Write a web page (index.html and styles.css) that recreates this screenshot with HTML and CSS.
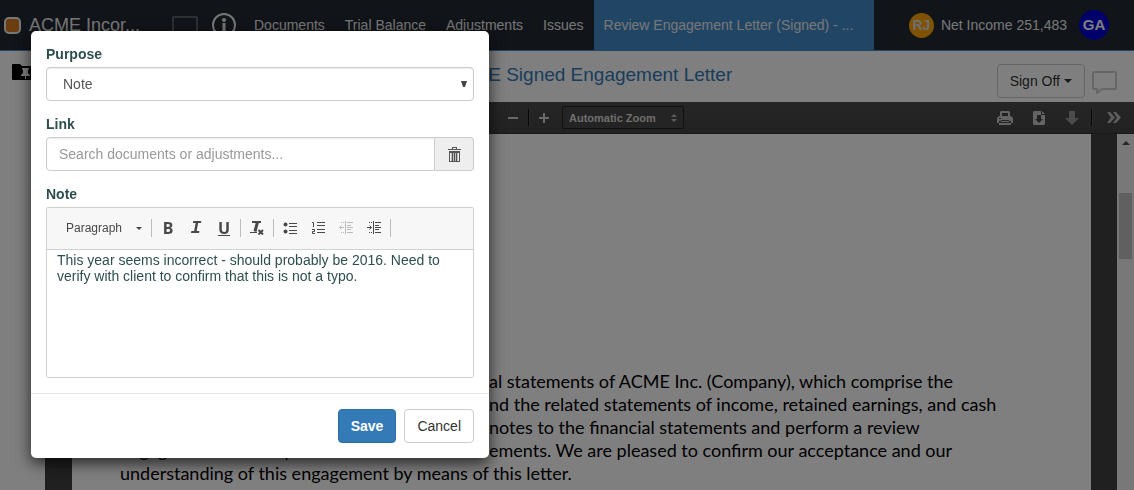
FILE: index.html
```html
<!DOCTYPE html>
<html lang="en">
<head>
<meta charset="utf-8">
<title>Review Engagement Letter</title>
<link rel="stylesheet" href="styles.css">
</head>
<body>
<div class="app">
  <nav class="nav">
    <span class="brand-mark"></span>
    <span class="brand">ACME Incor...</span>
    <svg class="nav-box" width="26" height="18" viewBox="0 0 26 18"><rect x="1" y="1" width="24" height="16" rx="1" fill="none" stroke="#5a6068" stroke-width="2"/></svg>
    <svg class="nav-info" width="26" height="26" viewBox="0 0 26 26"><circle cx="13" cy="13" r="11" fill="none" stroke="#eee" stroke-width="2"/><circle cx="13" cy="8" r="2" fill="#eee"/><path d="M13 11v8" stroke="#eee" stroke-width="3"/></svg>
    <div class="links">
      <a href="#">Documents</a>
      <a href="#">Trial Balance</a>
      <a href="#">Adjustments</a>
      <a href="#">Issues</a>
    </div>
    <a class="tab" href="#">Review Engagement Letter (Signed) - ...</a>
    <div class="account">
      <span class="avatar small">RJ</span>
      <span class="income">Net Income 251,483</span>
      <span class="avatar large">GA</span>
    </div>
  </nav>
  <div class="main">
    <aside class="side">
      <svg width="26" height="16" viewBox="0 0 26 16"><path d="M1 0h7l2 2h14v14H1a1 1 0 0 1-1-1V1a1 1 0 0 1 1-1z" fill="#000"/><path d="M10 4h7v1l-1 1v3l2 2v1h-4v3h-1v-3H9v-1l2-2V6l-1-1z" fill="#fff"/></svg>
    </aside>
    <div class="content">
      <header class="doc-head">
        <h1>ACME Signed Engagement Letter</h1>
        <button class="btn sign" type="button">Sign Off<svg width="8" height="4" viewBox="0 0 8 4"><path d="M0 0h8L4 4z" fill="#333"/></svg></button>
        <svg class="comment" width="25" height="23" viewBox="0 0 25 23"><path d="M2 1h21q1 0 1 1v15q0 1-1 1H10l-5 4v-4H2q-1 0-1-1V2q0-1 1-1z" fill="none" stroke="#ccc" stroke-width="2"/></svg>
      </header>
      <div class="pdf-bar">
        <button type="button" aria-label="Zoom out"><svg width="10" height="10" viewBox="0 0 10 10"><path d="M0 5h10" stroke="#d5d5d5" stroke-width="2"/></svg></button>
        <span class="pdf-sep"></span>
        <button type="button" aria-label="Zoom in"><svg width="10" height="10" viewBox="0 0 10 10"><path d="M0 5h10M5 0v10" stroke="#d5d5d5" stroke-width="2"/></svg></button>
        <div class="zoom">
          <select aria-label="Zoom"><option>Automatic Zoom</option></select>
          <svg width="6" height="8" viewBox="0 0 6 8"><path d="M0 3l3-3 3 3zM0 5h6L3 8z" fill="#bbb"/></svg>
        </div>
        <div class="pdf-tools">
          <button type="button" aria-label="Print"><svg width="16" height="14" viewBox="0 0 16 14"><path d="M4 0h8l1 1v4h1l2 2v5h-2v-2H2v2H0V7l2-2h1V1z" fill="#c8c8c8"/><path d="M5 2h6v3H5zM2 7h2v1H2zM4 9h8v3H4z" fill="#444"/><path d="M4 10h8v2h2v2H2v-2h2z" fill="#c8c8c8"/><path d="M4 11h8v1H4z" fill="#444"/></svg></button>
          <button type="button" aria-label="Download"><svg width="12" height="14" viewBox="0 0 12 14"><path d="M1 0h7v4h4v9l-1 1H1l-1-1V1zM9 0l3 3H9z" fill="#c8c8c8"/><path d="M4 4h4v4h2l-4 4-4-4h2z" fill="#444"/></svg></button>
          <button type="button" aria-label="Bookmark"><svg width="14" height="14" viewBox="0 0 14 14"><path d="M4 0h6v7h4l-7 7-7-7h4z" fill="#999"/></svg></button>
          <span class="pdf-sep"></span>
          <button type="button" aria-label="More tools"><svg width="14" height="11" viewBox="0 0 14 11"><path d="M0 0h3l5 5.500-5 5.500H0l4-5.500zM6 0h3l5 5.500L9 11H6l4-5.500z" fill="#bbb"/></svg></button>
        </div>
      </div>
      <div class="viewer">
        <div class="page">
          <p><span class="lead"></span>al statements of ACME Inc. (Company), which comprise the</p>
          <p><span class="lead"></span>nd the related statements of income, retained earnings, and cash</p>
          <p><span class="lead"></span>notes to the financial statements and perform a review</p>
          <p><span class="lead">engagement with respect to the</span>ements. We are pleased to confirm our acceptance and our</p>
          <p>understanding of this engagement by means of this letter.</p>
        </div>
        <div class="scroll">
          <svg width="8" height="4" viewBox="0 0 8 4"><path d="M0 4h8L4 0z" fill="#505050"/></svg>
          <span class="thumb"></span>
        </div>
      </div>
    </div>
  </div>
</div>
<div class="backdrop"></div>
<form class="modal" role="dialog" aria-label="Note">
  <div class="modal-body">
    <div class="field">
      <label for="purpose">Purpose</label>
      <div class="select-wrap">
        <select id="purpose" class="control"><option>Note</option></select>
        <svg width="6" height="6" viewBox="0 0 6 6"><path d="M0 0h6L4 6H2z" fill="#444"/></svg>
      </div>
    </div>
    <div class="field">
      <label for="link">Link</label>
      <div class="group">
        <input id="link" class="control" type="text" placeholder="Search documents or adjustments...">
        <button class="trash" type="button" aria-label="Clear link"><svg width="13" height="15" viewBox="0 0 13 15"><path d="M4 0h5v1H4zM4 1h1v1H4zM8 1h1v1H8zM0 2h13v1H0zM1 4h11v2H1zM1 6h1v9H1zM11 6h1v9h-1zM1 14h11v1H1zM4 6h1v8H4zM6 6h1v8H6zM8 6h1v8H8z" fill="#555"/><path d="M3 6h1v8H3zM5 6h1v8H5zM7 6h1v8H7zM9 6h1v8H9z" fill="#bbb"/></svg></button>
      </div>
    </div>
    <div class="field">
      <label for="note">Note</label>
      <div class="editor">
        <div class="tools">
          <button class="format" type="button">Paragraph<svg width="6" height="3" viewBox="0 0 6 3"><path d="M0 0h6L3 3z" fill="#444"/></svg></button>
          <span class="sep"></span>
          <button type="button" aria-label="Bold"><b class="glyph">B</b></button>
          <button type="button" aria-label="Italic"><i class="glyph italic">I</i></button>
          <button type="button" aria-label="Underline"><u class="glyph">U</u></button>
          <span class="sep"></span>
          <button type="button" aria-label="Remove format"><svg width="14" height="14" viewBox="0 0 14 14" fill="none" stroke="#484848"><path d="M2 1h9" stroke-width="2"/><path d="M7.500 1L5 10.500" stroke-width="3"/><path d="M0 11.500h7"/><path d="M8.500 9l4.500 4.500M13 9l-4.500 4.500" stroke-width="2"/></svg></button>
          <span class="sep"></span>
          <button type="button" aria-label="Bulleted list"><svg width="14" height="12" viewBox="0 0 14 12"><circle cx="2.500" cy="2.500" r="2" fill="#484848"/><circle cx="2.500" cy="9.500" r="2" fill="#484848"/><path d="M6 1.500h8M6 4.500h8M6 8.500h8M6 11.500h8" stroke="#484848"/></svg></button>
          <button type="button" aria-label="Numbered list"><svg width="14" height="14" viewBox="0 0 14 14" fill="none" stroke="#484848"><path d="M6 1.500h8M6 4.500h8M6 8.500h8M6 11.500h8M1 1.500h1.500V6M1 8.500h2.500v2h-2v2H4"/></svg></button>
          <button type="button" aria-label="Outdent" disabled><svg width="14" height="14" viewBox="0 0 14 14" fill="none" stroke="#bbb"><path d="M6.500 0v13M8 1.500h6M8 4.500h4M8 6.500h6M8 8.500h4M8 11.500h6M0.500 6.500H5M2.500 4.500l-2 2 2 2M2 1.500h1M4 1.500h1M2 11.500h1M4 11.500h1"/></svg></button>
          <button type="button" aria-label="Indent"><svg width="14" height="14" viewBox="0 0 14 14" fill="none" stroke="#484848"><path d="M6.500 0v13M8 1.500h6M8 4.500h4M8 6.500h6M8 8.500h4M8 11.500h6M0 6.500h4.500M2.500 4.500l2 2-2 2M2 1.500h1M4 1.500h1M2 11.500h1M4 11.500h1"/></svg></button>
          <span class="sep"></span>
        </div>
        <textarea id="note" spellcheck="false">This year seems incorrect - should probably be 2016. Need to verify with client to confirm that this is not a typo.</textarea>
      </div>
    </div>
  </div>
  <div class="modal-foot">
    <button class="btn primary" type="button">Save</button>
    <button class="btn" type="button">Cancel</button>
  </div>
</form>
</body>
</html>
```

FILE: styles.css
```css
* { box-sizing: border-box; }
body {
  margin: 0;
  overflow: hidden;
  background: #fff;
  color: #333;
  font: 14px/20px "Liberation Sans", Arial, sans-serif;
}
button, input, select, textarea { font: inherit; color: inherit; margin: 0; }
button { cursor: pointer; }
svg { display: block; flex: none; }

.app { display: flex; flex-direction: column; height: 100vh; }

.nav {
  display: flex;
  align-items: center;
  flex: none;
  height: 51px;
  padding: 0 25px 0 4px;
  background: #222932;
  border-bottom: 1px solid #428bca;
  color: #eee;
  white-space: nowrap;
}
.nav a { color: inherit; text-decoration: none; }
.brand-mark {
  flex: none;
  width: 17px;
  height: 17px;
  background: #d77a1e;
  border: 2px solid #eee;
  border-radius: 5px;
}
.brand { flex: 0 0 144px; padding-left: 8px; font-size: 18px; }
.nav-box { margin-right: 13px; margin-left: 7px; }
.links { display: flex; gap: 20px; margin: 0 10px 0 17px; }
.tab {
  display: flex;
  align-items: center;
  flex: 0 0 280px;
  align-self: stretch;
  padding-left: 10px;
  background: #428bca;
}
.account { display: flex; align-items: center; margin-left: auto; }
.avatar {
  display: flex;
  align-items: center;
  justify-content: center;
  border-radius: 50%;
  color: #fff;
  font-weight: bold;
}
.small { width: 25px; height: 25px; background: #ffa500; color: #ddd; }
.large { width: 30px; height: 30px; background: #0000d8; font-size: 15px; }
.income { margin: 0 12px 0 7px; }

.main { display: flex; flex: 1; min-height: 0; }
.side { flex: 0 0 45px; padding: 13px 0 0 12px; }
.content { display: flex; flex: 1; flex-direction: column; min-width: 0; }
.doc-head { display: flex; flex: none; height: 51px; padding: 0 17px 0 401px; }
.doc-head h1 {
  flex: 1;
  margin: 0;
  padding-top: 12px;
  color: #337ab7;
  font-size: 19px;
  font-weight: normal;
  line-height: 24px;
}
.btn {
  height: 34px;
  padding: 0 12px;
  border: 1px solid #ccc;
  border-radius: 4px;
  background: #fff;
}
.sign {
  display: flex;
  align-items: center;
  gap: 4px;
  margin: 13px 7px 0 0;
  background: transparent;
}
.comment { margin-top: 20px; }

.pdf-bar {
  display: flex;
  align-items: center;
  flex: none;
  height: 32px;
  padding: 0 13px 0 463px;
  background: linear-gradient(#4c4c4c, #444);
  border-bottom: 1px solid #333;
}
.pdf-bar button { padding: 0; border: 0; background: none; }
.pdf-sep { width: 2px; height: 17px; margin: 0 9px 0 10px; background: #111; border-right: 1px solid #555; }
.zoom { position: relative; width: 122px; margin-left: 13px; }
.zoom select {
  display: block;
  width: 100%;
  height: 23px;
  padding: 0 6px;
  appearance: none;
  border: 1px solid #222;
  border-radius: 2px;
  background: #484848;
  color: #ddd;
  font-size: 11px;
  font-weight: bold;
}
.zoom svg { position: absolute; top: 8px; right: 7px; }
.pdf-tools { display: flex; align-items: center; margin-left: auto; }
.pdf-tools button { margin-left: 20px; }
.pdf-tools .pdf-sep { margin: 0 -6px 0 12px; }

.viewer { display: flex; flex: 1; min-height: 0; padding-left: 27px; background: #404040; }
.page {
  flex: 1;
  overflow: hidden;
  margin-right: 26px;
  padding: 236px 48px 0;
  background: #fff;
  color: #000;
  font: 18px/23px Lato, sans-serif;
  white-space: nowrap;
}
.page p { display: flex; margin: 0; }
.lead { flex: 0 0 369px; }
.scroll {
  display: flex;
  flex: 0 0 17px;
  flex-direction: column;
  align-items: center;
  padding-top: 7px;
  background: #f1f1f1;
}
.thumb { width: 13px; height: 66px; margin-top: 48px; background: #c1c1c1; }

.backdrop { position: fixed; inset: 0; background: rgba(0, 0, 0, 0.5); }
.modal {
  position: absolute;
  top: 31px;
  left: 31px;
  width: 458px;
  border-radius: 5px;
  background: #fff;
  box-shadow: 0 5px 15px rgba(0, 0, 0, 0.7);
}
.modal-body { display: flex; flex-direction: column; gap: 13px; padding: 13px 15px 15px; }
.field label { display: block; margin-bottom: 3px; color: #2f4f4f; font-weight: bold; }
.control {
  display: block;
  width: 100%;
  height: 34px;
  padding: 0 12px;
  border: 1px solid #ccc;
  border-radius: 4px;
  background: #fff;
  box-shadow: inset 0 1px 1px rgba(0, 0, 0, 0.08);
  color: #555;
}
.control::placeholder { color: #999; }
.select-wrap { position: relative; }
.select-wrap select { padding: 0 16px; appearance: none; }
.select-wrap svg { position: absolute; top: 14px; right: 7px; }
.group { display: flex; }
.group .control { border-radius: 4px 0 0 4px; }
.trash {
  display: flex;
  align-items: center;
  justify-content: center;
  flex: 0 0 39px;
  border: 1px solid #ccc;
  border-left: 0;
  border-radius: 0 4px 4px 0;
  background: #eee;
}
.editor { border: 1px solid #d1d1d1; border-radius: 2px; }
.tools {
  display: flex;
  align-items: center;
  height: 42px;
  padding: 0 6px 1px;
  border-bottom: 1px solid #d1d1d1;
  background: #f7f7f7;
}
.tools button {
  display: flex;
  align-items: center;
  justify-content: center;
  flex: 0 0 28px;
  height: 28px;
  padding: 0;
  border: 0;
  background: none;
  color: #484848;
}
.tools .format { flex: 0 0 96px; justify-content: space-between; padding: 0 7px 0 13px; font-size: 12px; }
.sep { width: 1px; height: 18px; margin: 0 2px; background: #bcbcbc; }
.glyph { font: bold 16px/18px "Noto Sans", sans-serif; }
.italic { font: italic bold 18px/20px "Liberation Mono", monospace; }
.editor textarea {
  display: block;
  width: 100%;
  height: 127px;
  padding: 2px 10px;
  border: 0;
  resize: none;
  background: #fff;
  color: #2f4f4f;
  line-height: 16px;
}
.modal-foot { display: flex; justify-content: flex-end; gap: 8px; padding: 15px; border-top: 1px solid #e5e5e5; }
.primary { border-color: #2e6da4; background: #337ab7; color: #fff; font-weight: bold; }
```
